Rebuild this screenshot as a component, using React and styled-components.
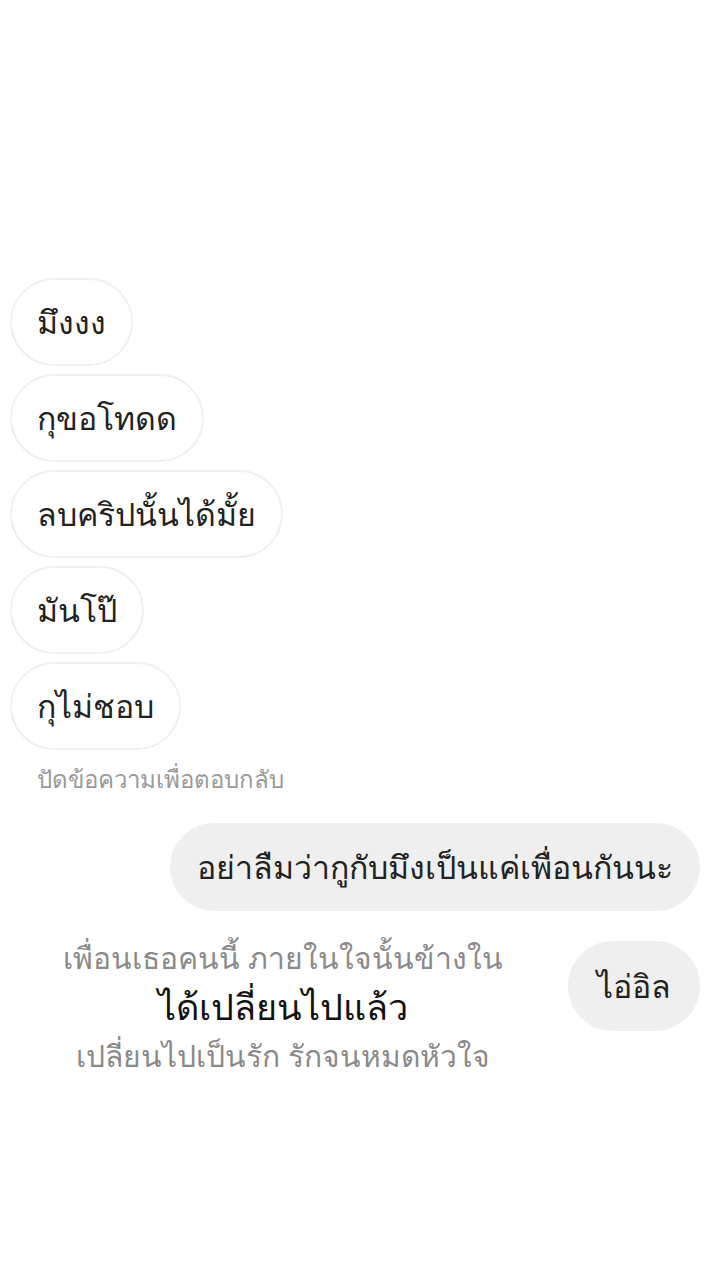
import React from 'react'
import styled, { createGlobalStyle } from 'styled-components'

const GlobalStyle = createGlobalStyle`
  html, body {
    margin: 0;
    padding: 0;
    background: #fff;
  }
  body {
    font-family: "Noto Sans", "Liberation Sans", sans-serif;
  }
`

const received = ['มึงงง', 'กุขอโทดด', 'ลบคริปนั้นได้มั้ย', 'มันโป๊', 'กุไม่ชอบ']

function App() {
  return (
    <Page>
      <GlobalStyle />
      <Thread>
        {received.map((text) => (
          <Bubble key={text}>{text}</Bubble>
        ))}
        <Hint>ปัดข้อความเพื่อตอบกลับ</Hint>
        <SentRow>
          <Bubble $sent>อย่าลืมว่ากูกับมึงเป็นแค่เพื่อนกันนะ</Bubble>
        </SentRow>
        <LastRow>
          <Lyrics>
            <LyricLine>เพื่อนเธอคนนี้ ภายในใจนั้นข้างใน</LyricLine>
            <LyricLine $strong>ได้เปลี่ยนไปแล้ว</LyricLine>
            <LyricLine>เปลี่ยนไปเป็นรัก รักจนหมดหัวใจ</LyricLine>
          </Lyrics>
          <Bubble $sent $short>ไอ่อิล</Bubble>
        </LastRow>
      </Thread>
    </Page>
  )
}

const Page = styled.div`
  width: 720px;
  height: 1280px;
  background: #fff;
  overflow: hidden;
`

const Thread = styled.div`
  display: flex;
  flex-direction: column;
  align-items: flex-start;
  gap: 8px;
  padding: 278px 20px 0 10px;
`

const Bubble = styled.div`
  box-sizing: border-box;
  height: ${(p) => (p.$short ? '90px' : '88px')};
  display: flex;
  align-items: center;
  padding: 0 ${(p) => (p.$short ? '27px' : '25px')};
  border-radius: 45px;
  font-size: 32px;
  color: #222;
  background: ${(p) => (p.$sent ? '#efefef' : '#fff')};
  border: 2px solid ${(p) => (p.$sent ? '#efefef' : '#f0f0f0')};
  white-space: nowrap;
`

const Hint = styled.div`
  margin: 2px 0 0 27px;
  font-size: 24px;
  color: #9a9a9a;
`

const SentRow = styled.div`
  align-self: stretch;
  display: flex;
  justify-content: flex-end;
  margin-top: 16px;
`

const LastRow = styled.div`
  align-self: stretch;
  display: flex;
  justify-content: space-between;
  align-items: flex-start;
  margin-top: 22px;
`

const Lyrics = styled.div`
  width: 546px;
  display: flex;
  flex-direction: column;
  align-items: center;
  gap: 3px;
  margin-top: -6px;
`

const LyricLine = styled.div`
  font-size: ${(p) => (p.$strong ? '36px' : '30px')};
  line-height: 46px;
  color: ${(p) => (p.$strong ? '#111' : '#8a8a8a')};
`

export default App
